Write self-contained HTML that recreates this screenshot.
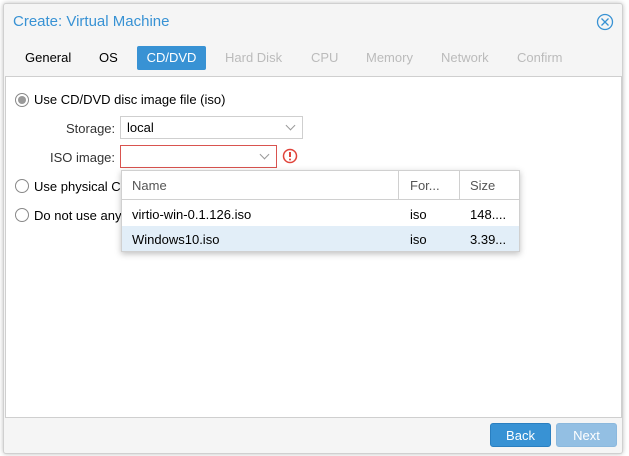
<!DOCTYPE html>
<html><head><style>
*{box-sizing:border-box;margin:0;padding:0}
body{width:629px;height:456px;background:#fff;font-family:"Liberation Sans",Arial,sans-serif;font-size:13px;color:#000;position:relative;overflow:hidden}
.abs{position:absolute}
.win{left:3px;top:3px;width:620px;height:451px;background:#f5f5f5;border:1px solid #d0d0d0;border-radius:3px;box-shadow:0 0 5px rgba(0,0,0,.25)}
.title{left:13px;top:13px;font-size:15px;color:#3892d4}
.tab{top:50px;font-size:13px;color:#000}
.dis{color:#bbb}
.cd{left:137px;top:46px;width:69px;height:24px;background:#3892d4;color:#fff;border-radius:2px;text-align:center;line-height:24px}
.body{left:5px;top:76px;width:617px;height:342px;background:#fff;border:1px solid #cfcfcf}
.radio{width:14px;height:14px;border:1px solid #888;border-radius:50%;background:#fff}
.lbl{font-size:13px;color:#333}
.field{height:23px;border:1px solid #cfcfcf;background:#fff;padding-left:6px;line-height:21px}
.chev{position:absolute;right:8px;top:5px;width:7px;height:7px;border-right:1px solid #999;border-bottom:1px solid #999;transform:rotate(45deg)}
.dd{left:121px;top:170px;width:399px;height:82px;background:#fff;border:1px solid #d0d0d0;box-shadow:0 2px 6px rgba(0,0,0,.25)}
.btn{top:423px;width:61px;height:24px;border-radius:3px;color:#fff;text-align:center;line-height:24px}
</style></head><body>
<div class="abs win"></div>
<div class="abs title">Create: Virtual Machine</div>
<svg class="abs" style="left:596px;top:13px" width="18" height="18"><circle cx="9" cy="9" r="7.5" fill="none" stroke="#3892d4" stroke-width="1.3"/><path d="M5.5 5.5L12.5 12.5M12.5 5.5L5.5 12.5" stroke="#3892d4" stroke-width="1.3"/></svg>
<div class="abs tab" style="left:25px">General</div>
<div class="abs tab" style="left:99px">OS</div>
<div class="abs cd">CD/DVD</div>
<div class="abs tab dis" style="left:225px">Hard Disk</div>
<div class="abs tab dis" style="left:311px">CPU</div>
<div class="abs tab dis" style="left:366px">Memory</div>
<div class="abs tab dis" style="left:441px">Network</div>
<div class="abs tab dis" style="left:517px">Confirm</div>
<div class="abs body"></div>
<div class="abs radio" style="left:15px;top:93px;background:#fff"><div style="margin:2px;width:8px;height:8px;border-radius:50%;background:#999"></div></div>
<div class="abs lbl" style="left:34px;top:92px;color:#000">Use CD/DVD disc image file (iso)</div>
<div class="abs lbl" style="left:66px;top:121px">Storage:</div>
<div class="abs field" style="left:120px;top:116px;width:183px">local<div class="chev"></div></div>
<div class="abs lbl" style="left:50px;top:150px">ISO image:</div>
<div class="abs field" style="left:120px;top:145px;width:157px;border-color:#d9534f"><div class="chev"></div></div>
<svg class="abs" style="left:282px;top:148px" width="16" height="16"><circle cx="8" cy="8" r="6.5" fill="none" stroke="#e0433a" stroke-width="1.5"/><path d="M8 4v5" stroke="#e0433a" stroke-width="2"/><circle cx="8" cy="11.5" r="1" fill="#e0433a"/></svg>
<div class="abs radio" style="left:15px;top:179px"></div>
<div class="abs lbl" style="left:34px;top:179px;color:#000">Use physical C</div>
<div class="abs radio" style="left:15px;top:208px"></div>
<div class="abs lbl" style="left:34px;top:208px;color:#000">Do not use any</div>
<div class="abs dd">
 <div class="abs" style="left:0;top:0;width:397px;height:29px;border-bottom:1px solid #d0d0d0"></div>
 <div class="abs" style="left:276px;top:0;width:1px;height:29px;background:#d0d0d0"></div>
 <div class="abs" style="left:337px;top:0;width:1px;height:29px;background:#d0d0d0"></div>
 <div class="abs" style="left:10px;top:7px;color:#555">Name</div>
 <div class="abs" style="left:288px;top:7px;color:#555">For...</div>
 <div class="abs" style="left:348px;top:7px;color:#555">Size</div>
 <div class="abs" style="left:10px;top:36px">virtio-win-0.1.126.iso</div>
 <div class="abs" style="left:288px;top:36px">iso</div>
 <div class="abs" style="left:348px;top:36px">148....</div>
 <div class="abs" style="left:0;top:55px;width:397px;height:25px;background:#e2eef8"></div>
 <div class="abs" style="left:10px;top:61px">Windows10.iso</div>
 <div class="abs" style="left:288px;top:61px">iso</div>
 <div class="abs" style="left:348px;top:61px">3.39...</div>
</div>
<div class="abs btn" style="left:490px;background:#3892d4;border:1px solid #2a7fc0">Back</div>
<div class="abs btn" style="left:556px;background:#93bfe3;border:1px solid #8bb8dd">Next</div>
</body></html>
